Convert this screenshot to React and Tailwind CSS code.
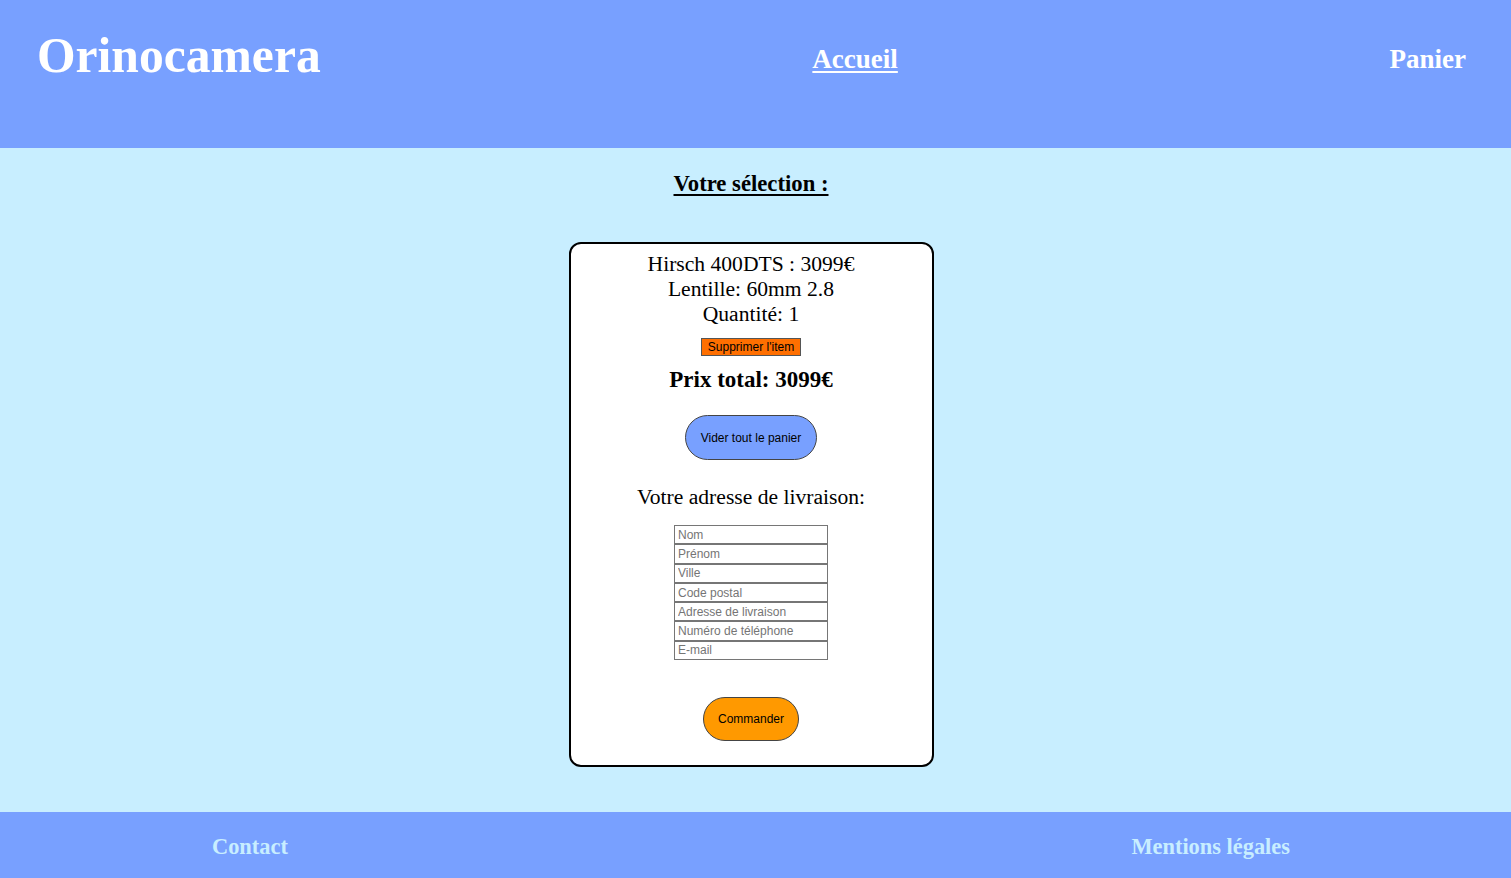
export default function App() {
  const fields = [
    "Nom",
    "Prénom",
    "Ville",
    "Code postal",
    "Adresse de livraison",
    "Numéro de téléphone",
    "E-mail",
  ];
  return (
    <div className="min-h-[878px] flex flex-col bg-[#c8eeff] font-['Liberation_Serif',serif]">
      <header className="h-[148px] bg-[#78a0ff] flex justify-between items-start pl-[37px] pr-[45px]">
        <h1 className="mt-[27px] text-[49.6px] leading-[57px] font-bold text-white">Orinocamera</h1>
        <a href="#" className="mt-[44px] text-[27px] leading-[31px] font-bold text-white underline decoration-2 underline-offset-[3px]">Accueil</a>
        <a href="#" className="mt-[44px] text-[27px] leading-[31px] font-bold text-white">Panier</a>
      </header>
      <main className="flex-1 flex flex-col items-center pt-[23px] pr-[9px]">
        <h2 className="text-[22.7px] leading-[26px] font-bold text-black underline decoration-2 underline-offset-[3px]">Votre sélection :</h2>
        <div className="mt-[45px] w-[365px] bg-white border-2 border-black rounded-[12px] flex flex-col items-center pt-[8px] pb-[24px]">
          <p className="text-[21.6px] leading-[25px] text-black">Hirsch 400DTS : 3099€</p>
          <p className="text-[21.6px] leading-[25px] text-black">Lentille: 60mm 2.8</p>
          <p className="text-[21.6px] leading-[25px] text-black">Quantité: 1</p>
          <button className="mt-[11px] w-[100px] h-[18px] bg-[#ff6f00] border border-[#555] text-[12px] leading-[14px] text-black font-['Liberation_Sans',Arial,sans-serif]">Supprimer l'item</button>
          <p className="mt-[11px] text-[23px] leading-[26px] font-bold text-black">Prix total: 3099€</p>
          <button className="mt-[22px] w-[132px] h-[45px] bg-[#78a0ff] border border-[#444] rounded-full text-[12px] text-black font-['Liberation_Sans',Arial,sans-serif]">Vider tout le panier</button>
          <p className="mt-[25px] text-[21.6px] leading-[25px] text-black">Votre adresse de livraison:</p>
          <form className="mt-[15px] flex flex-col w-[154px]">
            {fields.map((f) => (
              <input
                key={f}
                type="text"
                placeholder={f}
                className="h-[19.3px] w-[154px] border border-[#767676] bg-white px-[3px] text-[12px] leading-[14px] text-black placeholder:text-[#757575] font-['Liberation_Sans',Arial,sans-serif] outline-none"
              />
            ))}
          </form>
          <button className="mt-[37px] w-[96px] h-[44px] bg-[#ff9900] border border-[#444] rounded-full text-[12px] text-black font-['Liberation_Sans',Arial,sans-serif]">Commander</button>
        </div>
        <div className="h-[45px]"></div>
      </main>
      <footer className="h-[66px] bg-[#78a0ff] flex justify-between items-center pl-[212px] pr-[221px] pt-[4px]">
        <a href="#" className="text-[22.4px] leading-[26px] font-bold text-[#c8eeff]">Contact</a>
        <a href="#" className="text-[22.4px] leading-[26px] font-bold text-[#c8eeff]">Mentions légales</a>
      </footer>
    </div>
  );
}
